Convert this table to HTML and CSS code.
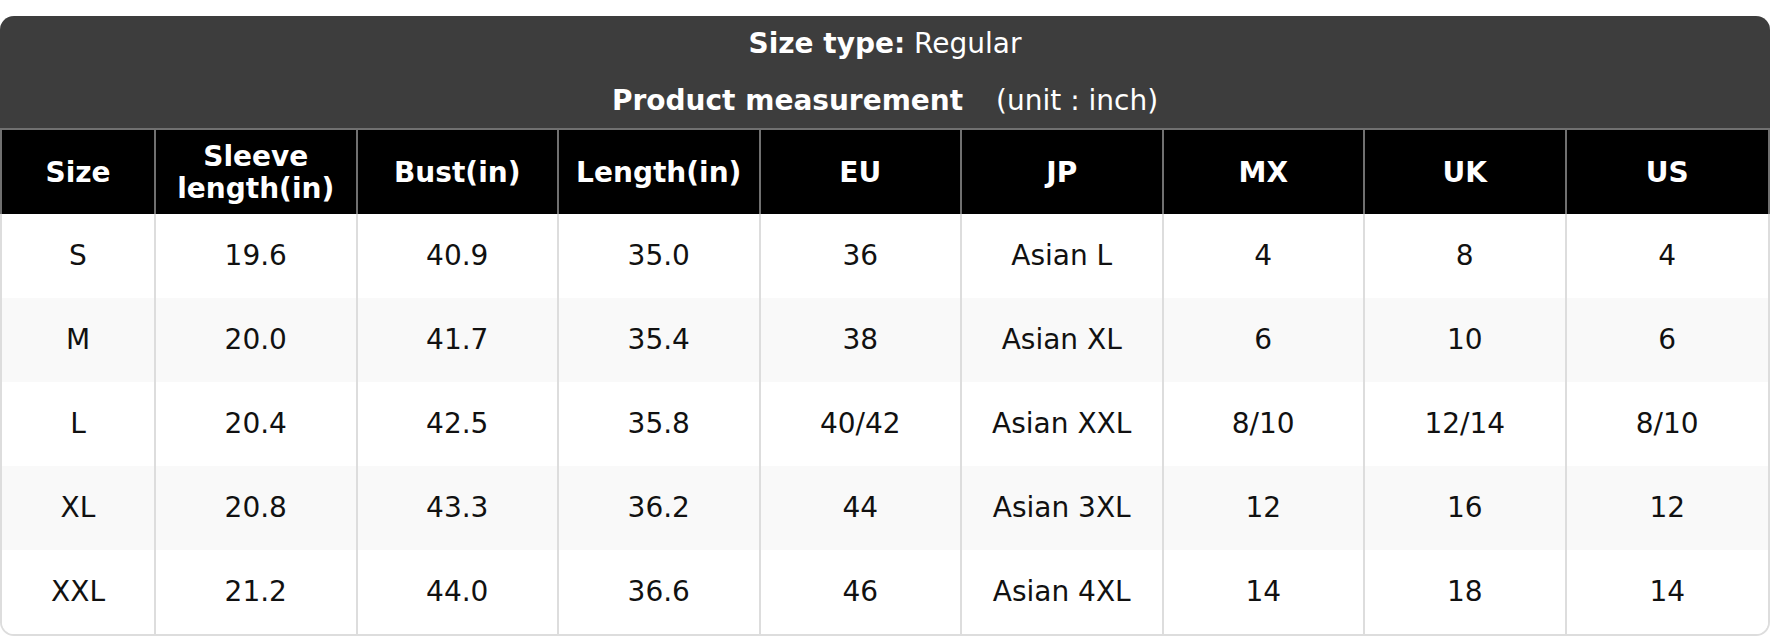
FILE: index.html
```html
<!DOCTYPE html>
<html lang="en">
<head>
<meta charset="utf-8">
<title>Size chart</title>
<link rel="stylesheet" href="styles.css">
</head>
<body>
<main class="page">
  <section class="card">
    <header class="card-head">
      <p class="head-line"><b>Size type:</b> Regular</p>
      <p class="head-line"><b>Product measurement</b> <span class="unit">(unit : inch)</span></p>
    </header>
    <table class="chart">
      <thead>
        <tr>
          <th class="col-size">Size</th>
          <th>Sleeve<br>length(in)</th>
          <th>Bust(in)</th>
          <th>Length(in)</th>
          <th>EU</th>
          <th>JP</th>
          <th>MX</th>
          <th>UK</th>
          <th>US</th>
        </tr>
      </thead>
      <tbody>
        <tr><td>S</td><td>19.6</td><td>40.9</td><td>35.0</td><td>36</td><td>Asian L</td><td>4</td><td>8</td><td>4</td></tr>
        <tr><td>M</td><td>20.0</td><td>41.7</td><td>35.4</td><td>38</td><td>Asian XL</td><td>6</td><td>10</td><td>6</td></tr>
        <tr><td>L</td><td>20.4</td><td>42.5</td><td>35.8</td><td>40/42</td><td>Asian XXL</td><td>8/10</td><td>12/14</td><td>8/10</td></tr>
        <tr><td>XL</td><td>20.8</td><td>43.3</td><td>36.2</td><td>44</td><td>Asian 3XL</td><td>12</td><td>16</td><td>12</td></tr>
        <tr><td>XXL</td><td>21.2</td><td>44.0</td><td>36.6</td><td>46</td><td>Asian 4XL</td><td>14</td><td>18</td><td>14</td></tr>
      </tbody>
    </table>
  </section>
</main>
</body>
</html>
```

FILE: styles.css
```css
* { box-sizing: border-box; }

html, body {
  margin: 0;
  padding: 0;
  background: #ffffff;
}

body {
  font-family: "DejaVu Sans", Verdana, sans-serif;
  font-size: 28px;
  color: #111111;
}

.page {
  padding: 16px 0 0 0;
}

.card {
  background: #ffffff;
  border: 2px solid #dddddd;
  border-top: 0;
  border-radius: 14px;
}

.card-head {
  margin: 0 -2px;
  background: #3d3d3d;
  color: #ffffff;
  border-radius: 14px 14px 0 0;
  padding: 11px 0 11px;
  display: flex;
  flex-direction: column;
  align-items: center;
  gap: 24px;
}

.head-line {
  margin: 0;
  line-height: 33px;
  white-space: nowrap;
}

.head-line b { font-weight: bold; }

.unit {
  margin-left: 24px;
}

.chart {
  width: 100%;
  table-layout: fixed;
  border-collapse: separate;
  border-spacing: 0;
}

.chart th,
.chart td {
  text-align: center;
  vertical-align: middle;
}

.chart th {
  background: #000000;
  color: #ffffff;
  font-weight: bold;
  line-height: 32px;
  padding: 11px 6px 9px;
  height: 86px;
  border-top: 2px solid #707070;
  border-right: 2px solid #707070;
}

.chart th:first-child { box-shadow: -2px 0 0 #707070; }
.chart th:last-child { box-shadow: 2px 0 0 #707070; }

.chart th.col-size { width: 154px; }

.chart td {
  line-height: 34px;
  padding: 25px 6px;
  height: 84px;
  border-right: 2px solid #dddddd;
  background: #ffffff;
}

.chart th:last-child,
.chart td:last-child {
  border-right: 0;
}

.chart tbody tr:nth-child(even) td {
  background: #f9f9f9;
}

.chart tbody tr:last-child td:first-child { border-bottom-left-radius: 12px; }
.chart tbody tr:last-child td:last-child { border-bottom-right-radius: 12px; }
```
